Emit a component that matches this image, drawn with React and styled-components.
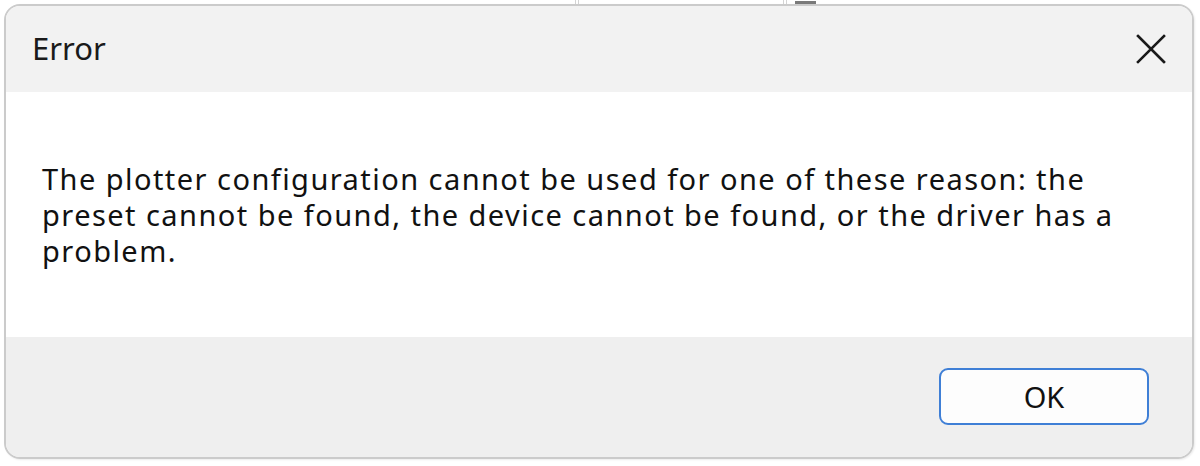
import React from "react";
import styled, { createGlobalStyle } from "styled-components";

const GlobalStyle = createGlobalStyle`
  html, body {
    margin: 0;
    padding: 0;
    background: #ffffff;
  }
  body {
    font-family: "Segoe UI", "Noto Sans", "Open Sans", sans-serif;
    color: #1a1a1a;
  }
`;

function App() {
  return (
    <>
      <GlobalStyle />
      <Page>
        {/* bits of the window behind the dialog */}
        <BackStrip>
          <Tick style={{ marginLeft: 575 }} />
          <Tick style={{ marginLeft: 2 }} />
          <Tick style={{ marginLeft: 204 }} />
          <Tick style={{ marginLeft: 2 }} />
          <Grip />
        </BackStrip>

        <Dialog>
          <TitleBar>
            <Title>Error</Title>
            <CloseButton aria-label="Close">
              <svg width="30" height="30" viewBox="0 0 30 30">
                <path
                  d="M2 2 L28 28 M28 2 L2 28"
                  stroke="#1a1a1a"
                  strokeWidth="2.6"
                  strokeLinecap="square"
                  fill="none"
                />
              </svg>
            </CloseButton>
          </TitleBar>

          <Body>
            <Message>
              The plotter configuration cannot be used for one of these reason: the
              preset cannot be found, the device cannot be found, or the driver has a
              problem.
            </Message>
          </Body>

          <Footer>
            <Button autoFocus>OK</Button>
          </Footer>
        </Dialog>
      </Page>
    </>
  );
}

export default App;

const Page = styled.div`
  width: 1200px;
  height: 466px;
  display: flex;
  flex-direction: column;
  overflow: hidden;
`;

const BackStrip = styled.div`
  height: 4px;
  display: flex;
  align-items: stretch;
`;

const Tick = styled.div`
  width: 1px;
  background: #d4d4d4;
`;

const Grip = styled.div`
  width: 21px;
  height: 3px;
  margin-left: 8px;
  align-self: flex-end;
  background: #7a7a7a;
`;

const Dialog = styled.div`
  margin-left: 4px;
  width: 1190px;
  height: 455px;
  box-sizing: border-box;
  border: 2px solid #cbcbcb;
  border-radius: 16px;
  overflow: hidden;
  display: flex;
  flex-direction: column;
  box-shadow: 1px 1px 2px rgba(0, 0, 0, 0.08);
`;

const TitleBar = styled.div`
  height: 86px;
  flex: none;
  background: #f2f2f2;
  display: flex;
  align-items: center;
  justify-content: space-between;
  padding: 0 26px 0 26px;
`;

const Title = styled.div`
  font-size: 31px;
  color: #1a1a1a;
  margin-top: -2px;
`;

const CloseButton = styled.button`
  border: none;
  background: transparent;
  padding: 0;
  width: 30px;
  height: 30px;
  display: flex;
  align-items: center;
  justify-content: center;
  cursor: pointer;
`;

const Body = styled.div`
  height: 245px;
  flex: none;
  background: #ffffff;
  box-sizing: border-box;
  padding: 69px 30px 0 36px;
`;

const Message = styled.p`
  margin: 0;
  font-size: 29px;
  letter-spacing: 1.45px;
  line-height: 36px;
  color: #111111;
  width: 1090px;
`;

const Footer = styled.div`
  flex: 1;
  background: #efefef;
  display: flex;
  justify-content: flex-end;
  align-items: flex-start;
  padding: 31px 43px 0 0;
`;

const Button = styled.button`
  width: 210px;
  height: 57px;
  box-sizing: border-box;
  border: 2px solid #3f7fd6;
  border-radius: 9px;
  background: #fdfdfd;
  font-family: inherit;
  font-size: 29px;
  color: #111111;
  outline: none;
  cursor: pointer;
`;
